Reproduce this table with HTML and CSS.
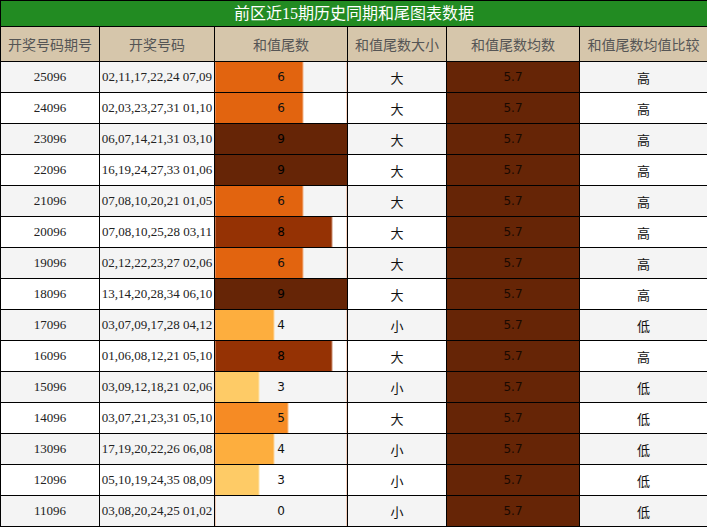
FILE: index.html
```html
<!DOCTYPE html>
<html lang="zh">
<head>
<meta charset="utf-8">
<title>前区近15期历史同期和尾图表数据</title>
<link rel="stylesheet" href="styles.css">
</head>
<body>
<table class="data">
  <colgroup>
    <col class="c1"><col class="c2"><col class="c3"><col class="c4"><col class="c5"><col class="c6">
  </colgroup>
  <thead>
    <tr class="title-row"><th colspan="6">前区近15期历史同期和尾图表数据</th></tr>
    <tr class="head-row">
      <th>开奖号码期号</th><th>开奖号码</th><th>和值尾数</th><th>和值尾数大小</th><th>和值尾数均数</th><th>和值尾数均值比较</th>
    </tr>
  </thead>
  <tbody>
    <tr><td class="num">25096</td><td class="num">02,11,17,22,24 07,09</td><td class="bar v6" style="--w:66.667%">6</td><td class="cjk">大</td><td class="avg"><span class="avg-val">5.7</span></td><td class="cjk">高</td></tr>
    <tr><td class="num">24096</td><td class="num">02,03,23,27,31 01,10</td><td class="bar v6" style="--w:66.667%">6</td><td class="cjk">大</td><td class="avg"><span class="avg-val">5.7</span></td><td class="cjk">高</td></tr>
    <tr><td class="num">23096</td><td class="num">06,07,14,21,31 03,10</td><td class="bar v9" style="--w:100%">9</td><td class="cjk">大</td><td class="avg"><span class="avg-val">5.7</span></td><td class="cjk">高</td></tr>
    <tr><td class="num">22096</td><td class="num">16,19,24,27,33 01,06</td><td class="bar v9" style="--w:100%">9</td><td class="cjk">大</td><td class="avg"><span class="avg-val">5.7</span></td><td class="cjk">高</td></tr>
    <tr><td class="num">21096</td><td class="num">07,08,10,20,21 01,05</td><td class="bar v6" style="--w:66.667%">6</td><td class="cjk">大</td><td class="avg"><span class="avg-val">5.7</span></td><td class="cjk">高</td></tr>
    <tr><td class="num">20096</td><td class="num">07,08,10,25,28 03,11</td><td class="bar v8" style="--w:88.889%">8</td><td class="cjk">大</td><td class="avg"><span class="avg-val">5.7</span></td><td class="cjk">高</td></tr>
    <tr><td class="num">19096</td><td class="num">02,12,22,23,27 02,06</td><td class="bar v6" style="--w:66.667%">6</td><td class="cjk">大</td><td class="avg"><span class="avg-val">5.7</span></td><td class="cjk">高</td></tr>
    <tr><td class="num">18096</td><td class="num">13,14,20,28,34 06,10</td><td class="bar v9" style="--w:100%">9</td><td class="cjk">大</td><td class="avg"><span class="avg-val">5.7</span></td><td class="cjk">高</td></tr>
    <tr><td class="num">17096</td><td class="num">03,07,09,17,28 04,12</td><td class="bar v4" style="--w:44.444%">4</td><td class="cjk">小</td><td class="avg"><span class="avg-val">5.7</span></td><td class="cjk">低</td></tr>
    <tr><td class="num">16096</td><td class="num">01,06,08,12,21 05,10</td><td class="bar v8" style="--w:88.889%">8</td><td class="cjk">大</td><td class="avg"><span class="avg-val">5.7</span></td><td class="cjk">高</td></tr>
    <tr><td class="num">15096</td><td class="num">03,09,12,18,21 02,06</td><td class="bar v3" style="--w:33.333%">3</td><td class="cjk">小</td><td class="avg"><span class="avg-val">5.7</span></td><td class="cjk">低</td></tr>
    <tr><td class="num">14096</td><td class="num">03,07,21,23,31 05,10</td><td class="bar v5" style="--w:55.556%">5</td><td class="cjk">大</td><td class="avg"><span class="avg-val">5.7</span></td><td class="cjk">低</td></tr>
    <tr><td class="num">13096</td><td class="num">17,19,20,22,26 06,08</td><td class="bar v4" style="--w:44.444%">4</td><td class="cjk">小</td><td class="avg"><span class="avg-val">5.7</span></td><td class="cjk">低</td></tr>
    <tr><td class="num">12096</td><td class="num">05,10,19,24,35 08,09</td><td class="bar v3" style="--w:33.333%">3</td><td class="cjk">小</td><td class="avg"><span class="avg-val">5.7</span></td><td class="cjk">低</td></tr>
    <tr><td class="num">11096</td><td class="num">03,08,20,24,25 01,02</td><td class="bar v0" style="--w:0%">0</td><td class="cjk">小</td><td class="avg"><span class="avg-val">5.7</span></td><td class="cjk">低</td></tr>
  </tbody>
</table>
</body>
</html>
```
FILE: styles.css
```css
html, body {
  margin: 0;
  padding: 0;
  background: #ffffff;
}

.data {
  width: 707px;
  border-collapse: collapse;
  table-layout: fixed;
  font-family: "Liberation Serif", "Noto Sans CJK SC", serif;
}

.c1 { width: 99px; }
.c2 { width: 115px; }
.c3 { width: 133px; }
.c4 { width: 99px; }
.c5 { width: 133px; }
.c6 { width: 128px; }

.data th,
.data td {
  border: 1px solid #000;
  padding: 0;
  text-align: center;
  vertical-align: middle;
}

.title-row th {
  height: 25px;
  background: #228b22;
  color: #ffffff;
  font-size: 16px;
  font-weight: normal;
  line-height: 25px;
}

.head-row th {
  height: 34px;
  background: #d6c6ab;
  color: #555555;
  font-size: 14px;
  font-weight: normal;
}

.data td {
  height: 30px;
  color: #222222;
  font-size: 13px;
}

.data tbody tr:nth-child(odd) td {
  background-color: #f4f4f4;
}

.data tbody tr:nth-child(even) td {
  background-color: #ffffff;
}

.data td.cjk {
  font-family: "Noto Sans CJK SC", sans-serif;
  font-size: 13px;
  color: #111;
}

.data td.bar {
  font-family: "DejaVu Sans", sans-serif;
  font-size: 12px;
  color: #111;
  --c: #e2640f;
  --e: #f2b48a;
  background-image: linear-gradient(to right,
    var(--c) 0,
    var(--c) calc(var(--w) - 1px),
    var(--e) calc(var(--w) - 1px),
    var(--e) var(--w),
    transparent var(--w),
    transparent calc(100% - 1px),
    #f2a680 calc(100% - 1px));
}

.data td.v9 { --c: #662506; --e: #662506; color: #000; }
.data td.v8 { --c: #953204; --e: #c98a6c; color: #000; }
.data td.v6 { --c: #e2640f; --e: #f2b48a; }
.data td.v5 { --c: #f68b24; --e: #f9c08a; }
.data td.v4 { --c: #fdae3e; --e: #fdd59c; }
.data td.v3 { --c: #fecb66; --e: #fee3aa; }
.data td.v0 { --c: transparent; --e: transparent; }

.data tbody tr td.avg {
  background: #662506;
}

.avg-val {
  font-family: "DejaVu Sans", sans-serif;
  font-size: 12px;
  color: #000000;
  opacity: 0.75;
}
```
